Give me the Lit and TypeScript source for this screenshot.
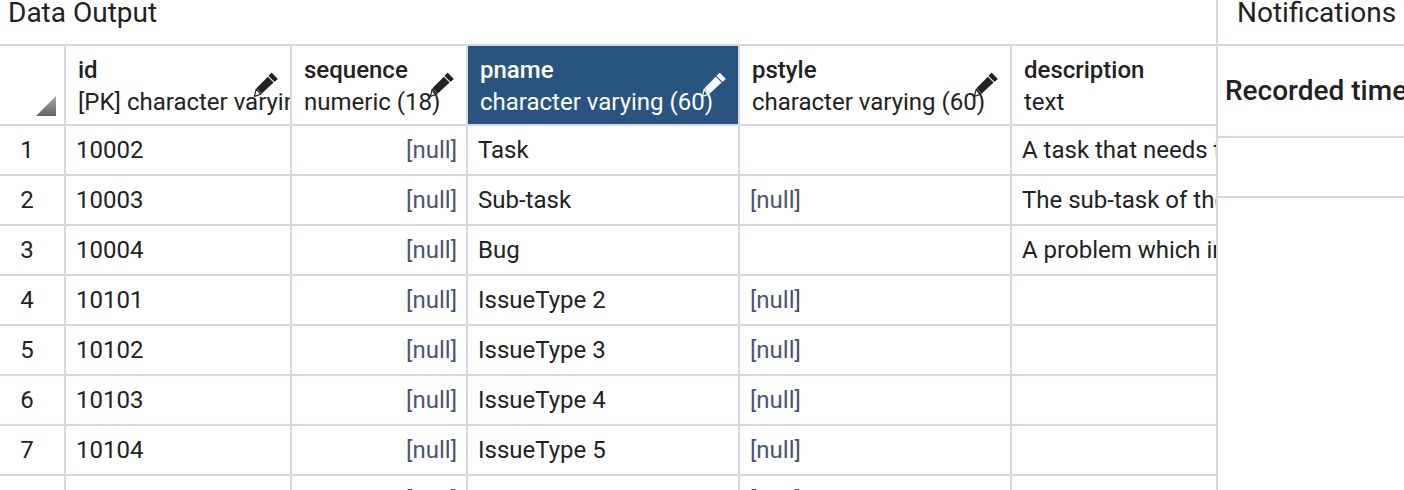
import { LitElement, html, css, nothing } from 'lit';
import { customElement } from 'lit/decorators.js';

type Col = { name: string; type: string };
type Row = { id: string; seq: null; pname: string; pstyle: string | null; desc: string };

const COLS: Col[] = [
  { name: 'id', type: '[PK] character varying (18)' },
  { name: 'sequence', type: 'numeric (18)' },
  { name: 'pname', type: 'character varying (60)' },
  { name: 'pstyle', type: 'character varying (60)' },
  { name: 'description', type: 'text' },
];

const ROWS: Row[] = [
  { id: '10002', seq: null, pname: 'Task', pstyle: '', desc: 'A task that needs to be done.' },
  { id: '10003', seq: null, pname: 'Sub-task', pstyle: null, desc: 'The sub-task of the issue' },
  { id: '10004', seq: null, pname: 'Bug', pstyle: '', desc: 'A problem which impairs or prevents the functions' },
  { id: '10101', seq: null, pname: 'IssueType 2', pstyle: null, desc: '' },
  { id: '10102', seq: null, pname: 'IssueType 3', pstyle: null, desc: '' },
  { id: '10103', seq: null, pname: 'IssueType 4', pstyle: null, desc: '' },
  { id: '10104', seq: null, pname: 'IssueType 5', pstyle: null, desc: '' },
  { id: '10105', seq: null, pname: 'IssueType 6', pstyle: null, desc: '' },
];

@customElement('app-root')
export class AppRoot extends LitElement {
  static styles = css`
    :host {
      display: flex;
      height: 490px;
      overflow: hidden;
      background: #fff;
      color: #222;
      font-family: Roboto, sans-serif;
      font-size: 24px;
    }

    .left {
      width: 1216px;
      flex: none;
      overflow: hidden;
    }
    .right {
      flex: 1;
      min-width: 0;
      overflow: hidden;
      border-left: 2px solid #d6d9e0;
    }

    .tab {
      height: 44px;
      box-sizing: border-box;
      font-size: 28px;
      line-height: 26px;
      white-space: nowrap;
    }
    .left .tab {
      padding-left: 8px;
    }
    .right .tab {
      padding-left: 19px;
    }

    .grid {
      display: grid;
      grid-template-columns: 66px 226px 176px 272px 272px 204px;
      grid-template-rows: 80px;
      grid-auto-rows: 50px;
      border-top: 2px solid #d6d9e0;
    }

    .cell {
      position: relative;
      box-sizing: border-box;
      overflow: hidden;
      white-space: nowrap;
      border-right: 2px solid #d6d9e0;
      border-bottom: 2px solid #d6d9e0;
      padding: 0 9px 0 10px;
      line-height: 48px;
    }
    .cell:nth-child(6n) {
      border-right: none;
    }

    .corner {
      display: flex;
      align-items: flex-end;
      justify-content: flex-end;
      padding: 0 8px 8px 0;
    }
    .corner i {
      width: 20px;
      height: 20px;
      background: linear-gradient(180deg, #a8a8a8, #646464);
      clip-path: polygon(100% 0, 100% 100%, 0 100%);
    }

    .head {
      padding: 8px 0 0 12px;
      line-height: 32px;
    }
    .head.sel {
      background: #2a5480;
      color: #fff;
    }
    .head b {
      display: block;
      font-weight: 500;
    }
    .head span {
      display: block;
    }
    .head svg {
      position: absolute;
      top: 25px;
      right: 12px;
      width: 27px;
      height: 27px;
      fill: #222;
      stroke: #222;
    }
    .head.sel svg {
      fill: #fff;
      stroke: #fff;
    }

    .num {
      padding: 0 10px 0 0;
      text-align: center;
    }
    .right-al {
      text-align: right;
    }
    .null {
      color: #4b5470;
    }

    .notes {
      display: grid;
      grid-template-rows: 92px 60px;
      border-top: 2px solid #d6d9e0;
    }
    .notes div {
      box-sizing: border-box;
      border-bottom: 2px solid #d6d9e0;
      padding-left: 7px;
      white-space: nowrap;
      overflow: hidden;
    }
    .notes .title {
      font-size: 28px;
      font-weight: 500;
      line-height: 90px;
    }
  `;

  private pencil() {
    return html`<svg viewBox="0 0 27 27" aria-hidden="true">
      <path d="M20.6 2.4 26 7.8 23.6 10.2 18.2 4.8Z" stroke-width="1.2" stroke-linejoin="round" />
      <path d="M16.8 5.8 22.6 11.6 10.6 22.8 5.4 17.2Z" stroke="none" />
      <path d="M5.2 18.2 9.8 23.2 3.4 25.4Z" fill="none" stroke-width="1.2" stroke-linejoin="round" />
    </svg>`;
  }

  private val(v: string | null) {
    return v === null ? html`<span class="null">[null]</span>` : v;
  }

  render() {
    return html`
      <div class="left">
        <div class="tab">Data Output</div>
        <div class="grid">
          <div class="cell corner"><i></i></div>
          ${COLS.map(
            (c) => html`<div class="cell head ${c.name === 'pname' ? 'sel' : ''}">
              <b>${c.name}</b><span>${c.type}</span>
              ${c.name === 'description' ? nothing : this.pencil()}
            </div>`,
          )}
          ${ROWS.map(
            (r, i) => html`
              <div class="cell num">${i + 1}</div>
              <div class="cell">${r.id}</div>
              <div class="cell right-al">${this.val(r.seq)}</div>
              <div class="cell">${r.pname}</div>
              <div class="cell">${this.val(r.pstyle)}</div>
              <div class="cell">${r.desc}</div>
            `,
          )}
        </div>
      </div>
      <div class="right">
        <div class="tab">Notifications</div>
        <div class="notes">
          <div class="title">Recorded time</div>
          <div></div>
        </div>
      </div>
    `;
  }
}
